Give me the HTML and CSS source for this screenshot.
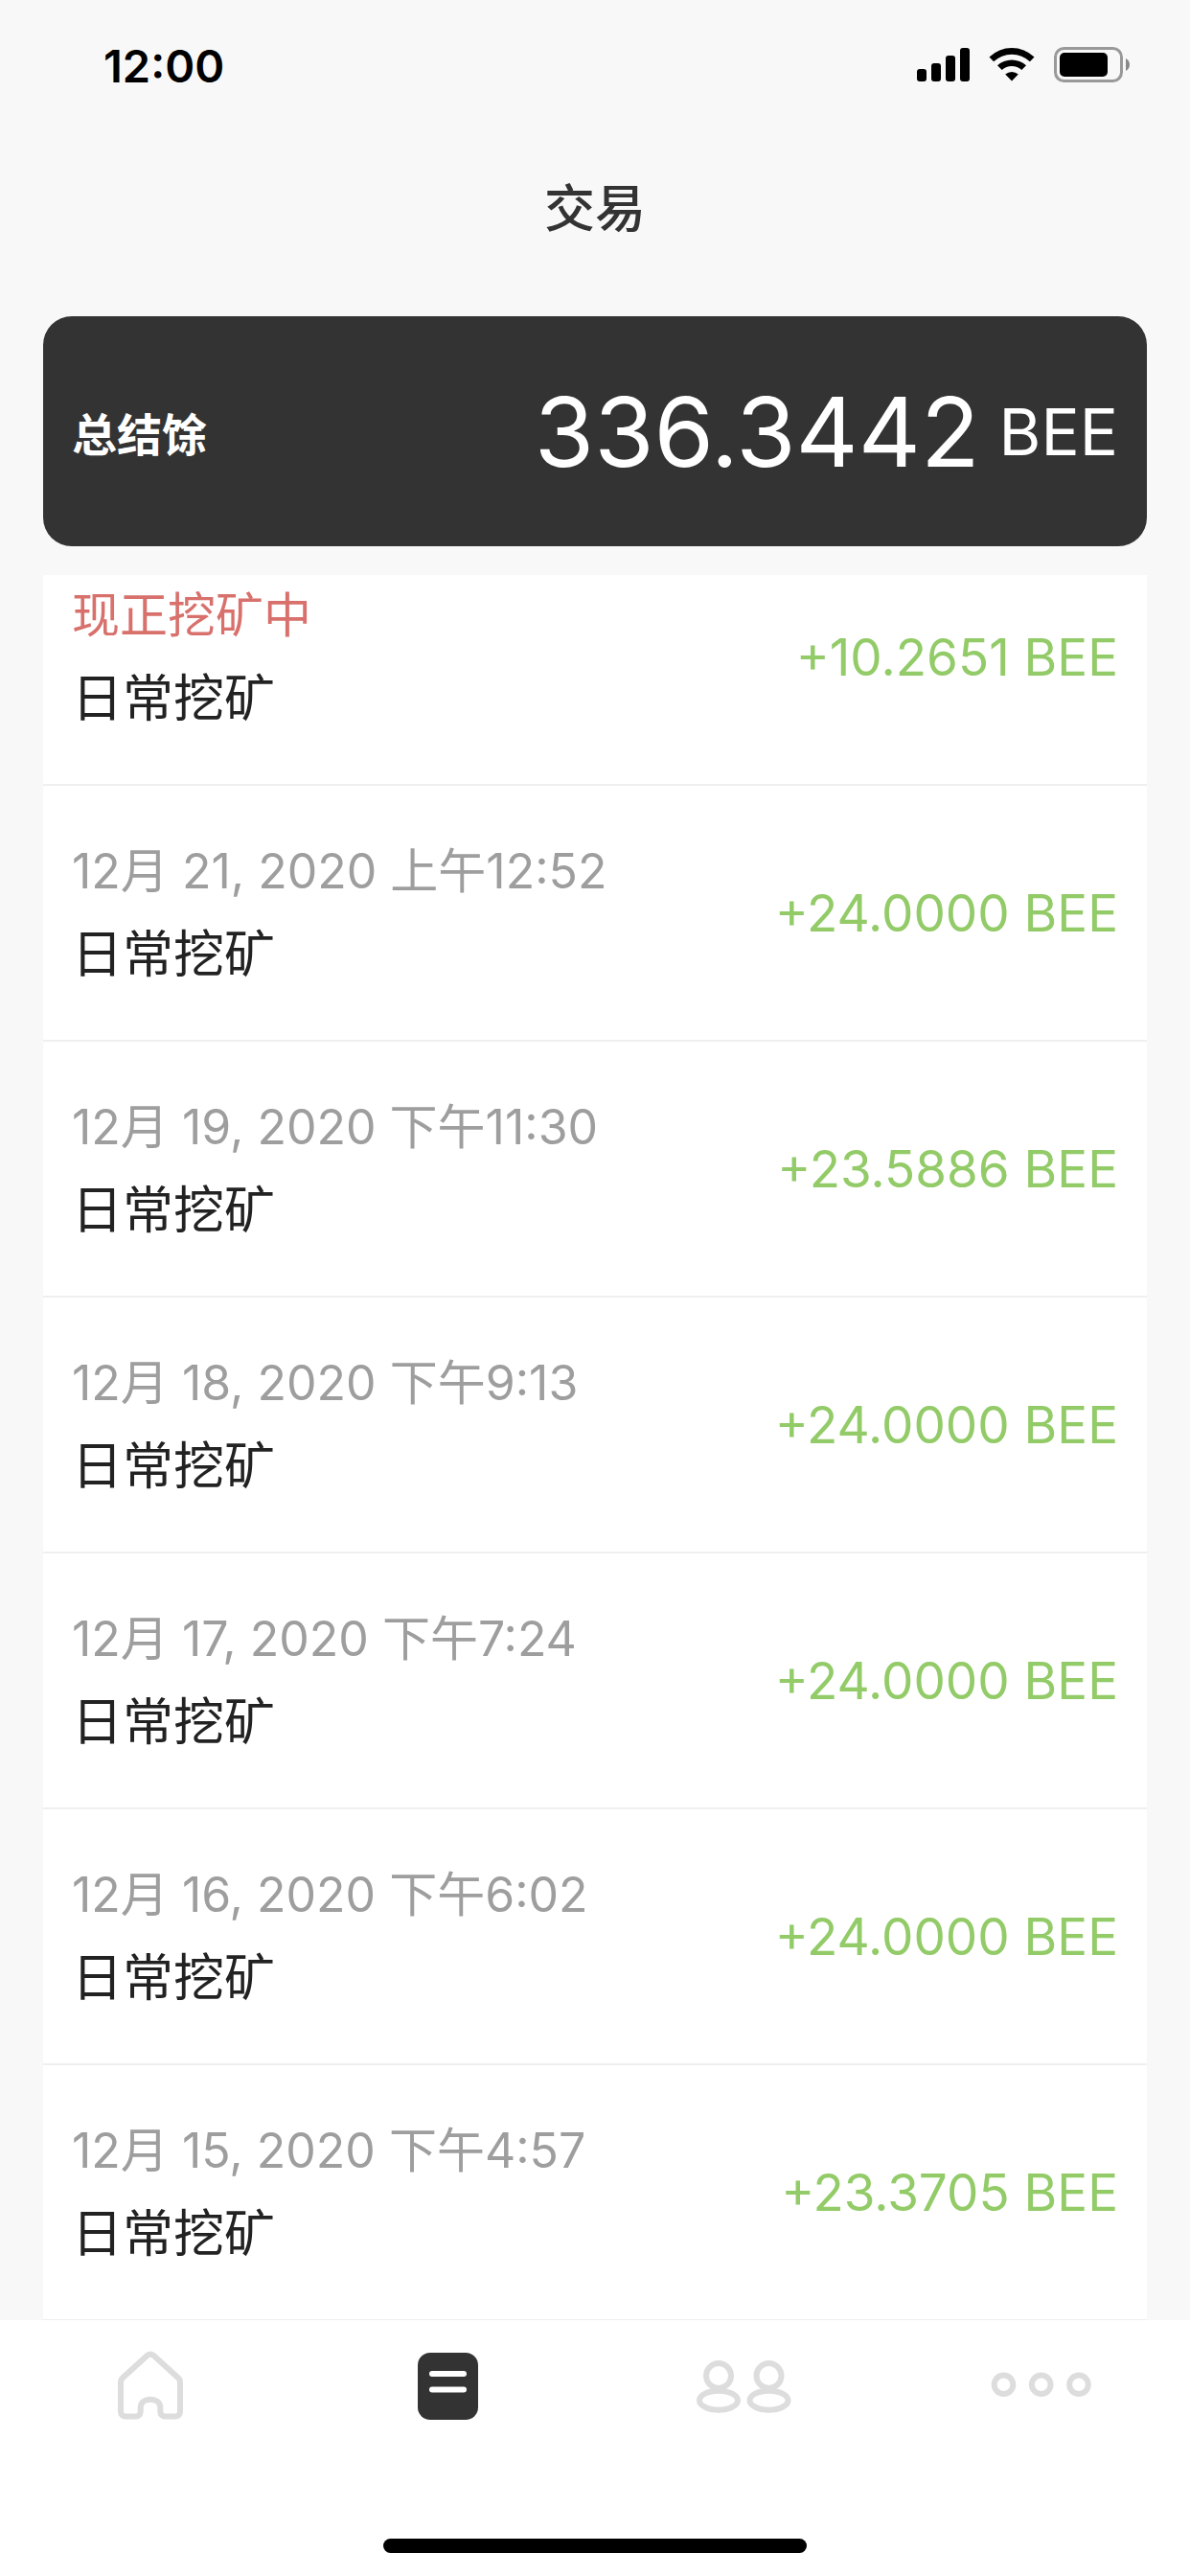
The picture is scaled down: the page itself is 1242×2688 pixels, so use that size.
FILE: index.html
```html
<!DOCTYPE html>
<html lang="zh-CN">
<head>
  <meta charset="UTF-8" />
  <meta name="viewport" content="width=device-width, initial-scale=1.0" />
  <title>交易</title>
  <link rel="stylesheet" href="styles.css">
</head>
<body>
  <div class="app">
    <!-- Status bar -->
    <div class="status-bar">
      <div class="clock">12:00</div>
      <div class="status-icons">
        <svg width="55" height="38" viewBox="0 0 55 38">
          <rect x="0" y="23" width="10" height="13" rx="3"/>
          <rect x="15" y="17" width="10" height="19" rx="3"/>
          <rect x="30" y="9" width="10" height="27" rx="3"/>
          <rect x="45" y="1" width="10" height="35" rx="3"/>
        </svg>
        <svg width="48" height="38" viewBox="0 0 48 38">
          <path d="M0.5 10.5a34 34 0 0 1 47 0l-4.6 4.8a27.3 27.3 0 0 0-37.8 0z"/>
          <path d="M9 19.3a22 22 0 0 1 30 0l-4.7 4.8a15.3 15.3 0 0 0-20.6 0z"/>
          <path d="M17.2 28.4a10.5 10.5 0 0 1 13.6 0l-6.8 7.1z"/>
        </svg>
        <svg width="80" height="38" viewBox="0 0 80 38">
          <rect x="1.5" y="1.5" width="69" height="34" rx="9" fill="none" stroke="#999" stroke-width="3"/>
          <rect x="6" y="6" width="50" height="25" rx="5"/>
          <path d="M75 12c5.3 2.5 5.3 10.5 0 13z" fill="#888"/>
        </svg>
      </div>
    </div>

    <h1 class="page-title">交易</h1>

    <!-- Balance card -->
    <div class="balance">
      <div class="balance-label">总结馀</div>
      <div class="balance-value">
        <span class="balance-number">336.3442</span>
        <span class="balance-unit">BEE</span>
      </div>
    </div>

    <!-- Transactions -->
    <div class="list">
      <ul class="transactions">
        <li class="row">
          <div class="info">
            <div class="date active">现正挖矿中</div>
            <div class="name">日常挖矿</div>
          </div>
          <div class="amount">+10.2651 BEE</div>
        </li>
        <li class="row">
          <div class="info">
            <div class="date">12月 21, 2020 上午12:52</div>
            <div class="name">日常挖矿</div>
          </div>
          <div class="amount">+24.0000 BEE</div>
        </li>
        <li class="row">
          <div class="info">
            <div class="date">12月 19, 2020 下午11:30</div>
            <div class="name">日常挖矿</div>
          </div>
          <div class="amount">+23.5886 BEE</div>
        </li>
        <li class="row">
          <div class="info">
            <div class="date">12月 18, 2020 下午9:13</div>
            <div class="name">日常挖矿</div>
          </div>
          <div class="amount">+24.0000 BEE</div>
        </li>
        <li class="row">
          <div class="info">
            <div class="date">12月 17, 2020 下午7:24</div>
            <div class="name">日常挖矿</div>
          </div>
          <div class="amount">+24.0000 BEE</div>
        </li>
        <li class="row">
          <div class="info">
            <div class="date">12月 16, 2020 下午6:02</div>
            <div class="name">日常挖矿</div>
          </div>
          <div class="amount">+24.0000 BEE</div>
        </li>
        <li class="row">
          <div class="info">
            <div class="date">12月 15, 2020 下午4:57</div>
            <div class="name">日常挖矿</div>
          </div>
          <div class="amount">+23.3705 BEE</div>
        </li>
      </ul>
    </div>

    <!-- Bottom tabs -->
    <div class="bottom-bar">
      <nav class="bottom-tabs">
        <a href="#home">
          <svg width="120" height="80" viewBox="0 0 120 80">
            <path d="M31 36c0-2 .8-3.600 2.300-5L58.500 8c2.200-1.800 4.800-1.800 7 0l25.200 23c1.500 1.400 2.300 3 2.300 5v30.500a5 5 0 0 1-5 5H77.300a5 5 0 0 1-5-5V62c0-5-4.500-8.300-10.300-8.300S51.700 57 51.700 62v4.500a5 5 0 0 1-5 5H36a5 5 0 0 1-5-5z"/>
          </svg>
        </a>
        <a href="#transactions" class="active">
          <svg width="120" height="80" viewBox="0 0 120 80">
            <rect x="30" y="5" width="63" height="70" rx="13"/>
            <path d="M45 27h33M45 43.5h33"/>
          </svg>
        </a>
        <a href="#team">
          <svg width="120" height="80" viewBox="0 0 120 80">
            <circle cx="34" cy="29" r="13"/>
            <ellipse cx="34" cy="54.7" rx="20" ry="10"/>
            <circle cx="86.5" cy="29" r="13"/>
            <ellipse cx="86.5" cy="54.7" rx="20" ry="10"/>
          </svg>
        </a>
        <a href="#more">
          <svg width="120" height="80" viewBox="0 0 120 80">
            <circle cx="20.5" cy="38.3" r="9.8"/>
            <circle cx="59.7" cy="38.3" r="9.8"/>
            <circle cx="99" cy="38.3" r="9.8"/>
          </svg>
        </a>
      </nav>
      <div class="home-indicator"></div>
    </div>
  </div>
</body>
</html>
```
FILE: styles.css
```css
* {
  box-sizing: border-box;
  margin: 0;
  padding: 0;
}

body {
  font-family: Inter, 'Noto Sans CJK SC', sans-serif;
  background: #f8f8f8;
  color: #222;
}

.app {
  display: flex;
  flex-direction: column;
  height: 100vh;
  overflow: hidden;
}

.status-bar {
  display: flex;
  justify-content: space-between;
  align-items: center;
  height: 136px;
  padding: 0 62px 0 108px;
  color: #000;
}

.clock {
  font-size: 47px;
  font-weight: 600;
}

.status-icons {
  display: flex;
  gap: 20px;
}

.page-title {
  height: 194px;
  line-height: 164px;
  text-align: center;
  font-size: 53px;
  font-weight: 500;
  color: #333;
}

.balance {
  display: flex;
  justify-content: space-between;
  align-items: center;
  height: 240px;
  margin: 0 45px 30px;
  padding: 0 30px;
  border-radius: 30px;
  background: #333;
  color: #fff;
}

.balance-label {
  font-size: 47px;
  font-weight: bold;
}

.balance-value {
  display: flex;
  align-items: center;
  gap: 20px;
}

.balance-number {
  font-size: 101px;
}

.balance-unit {
  font-size: 67px;
}

.list {
  flex: 1;
  min-height: 0;
  overflow: hidden;
  margin: 0 45px;
  background: #fff;
}

.transactions {
  margin-top: -47px;
  list-style: none;
}

.row {
  display: flex;
  justify-content: space-between;
  align-items: center;
  height: 267px;
  padding: 0 30px;
  border-bottom: 2px solid #efefef;
}

.date {
  line-height: 86px;
  font-size: 50px;
  color: #9e9e9e;
}

.date.active {
  color: #d8706c;
}

.name {
  line-height: 88px;
  font-size: 53px;
  color: #222;
}

.amount {
  font-size: 53px;
  color: #92cb68;
}

.bottom-bar {
  display: flex;
  flex-direction: column;
  justify-content: space-between;
  align-items: center;
  height: 267px;
  padding: 29px 0 24px;
  background: #fff;
}

.bottom-tabs {
  display: flex;
  width: 100%;
}

.bottom-tabs a {
  flex: 1;
  display: flex;
  justify-content: center;
}

.bottom-tabs svg {
  fill: none;
  stroke: #ddd;
  stroke-width: 6;
  stroke-linecap: round;
}

.bottom-tabs .active rect {
  fill: #333;
  stroke: none;
}

.bottom-tabs .active path {
  stroke: #fff;
}

.home-indicator {
  width: 442px;
  height: 15px;
  border-radius: 8px;
  background: #000;
}
```
